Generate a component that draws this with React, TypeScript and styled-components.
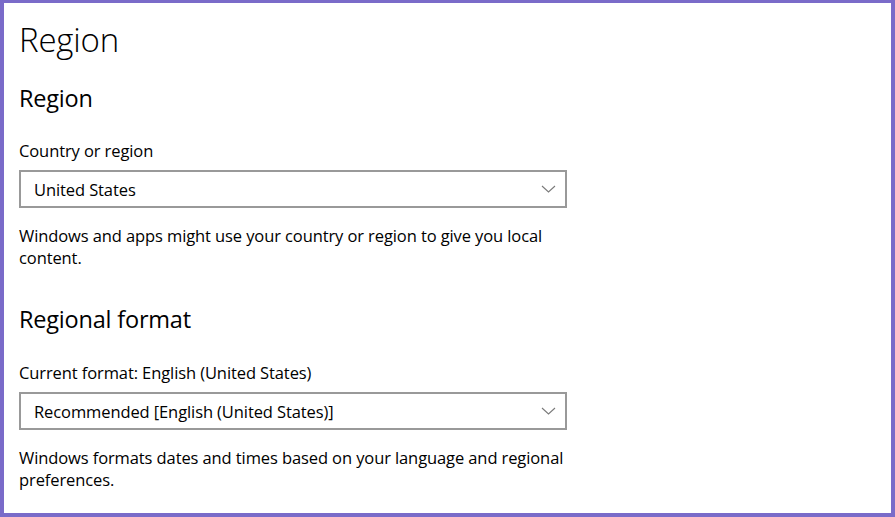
import React from "react";
import styled, { createGlobalStyle } from "styled-components";

const GlobalStyle = createGlobalStyle`
	html, body {
		margin: 0;
		padding: 0;
		background: #ffffff;
	}
	* {
		box-sizing: border-box;
	}
`;

export const Frame = styled.div`
	width: 895px;
	height: 517px;
	border: 4px solid #7a6bc9;
	border-top-width: 3px;
	background: #ffffff;
	font-family: "Open Sans", "Noto Sans", sans-serif;
	color: #000000;
	padding: 15px 0 0 15px;
	overflow: hidden;
`;

export const PageTitle = styled.h1`
	font-size: 33px;
	font-weight: 300;
	margin: 0;
	line-height: 44px;
	letter-spacing: -0.2px;
`;

export const SectionTitle = styled.h2<{ $top: number }>`
	font-size: 23.5px;
	font-weight: 400;
	margin: ${(p) => p.$top}px 0 0 0;
	line-height: 32px;
	letter-spacing: -0.2px;
`;

export const Label = styled.div<{ $top: number }>`
	font-size: 16.5px;
	line-height: 22px;
	margin-top: ${(p) => p.$top}px;
	letter-spacing: -0.1px;
`;

export const Select = styled.div`
	width: 548px;
	height: 38px;
	margin-top: 8px;
	border: 2px solid #999999;
	display: flex;
	align-items: center;
	justify-content: space-between;
	padding: 0 9px 0 13px;
	font-size: 16.5px;
	letter-spacing: -0.1px;
`;

export const Note = styled.p`
	font-size: 16.5px;
	line-height: 22px;
	margin: 17px 0 0 0;
	max-width: 572px;
	letter-spacing: -0.1px;
`;

const Chevron = () => (
	<svg width="15" height="8" viewBox="0 0 15 8">
		<path d="M1 1 L7.5 7 L14 1" fill="none" stroke="#7a7a7a" strokeWidth="1.1" />
	</svg>
);

type DropdownProps = { value: string };
const Dropdown = ({ value }: DropdownProps) => (
	<Select>
		<span>{value}</span>
		<Chevron />
	</Select>
);

export default function App() {
	return (
		<>
			<GlobalStyle />
			<Frame>
				<PageTitle>Region</PageTitle>
				<SectionTitle $top={20}>Region</SectionTitle>
				<Label $top={26}>Country or region</Label>
				<Dropdown value="United States" />
				<Note>
					Windows and apps might use your country or region to give you local
					content.
				</Note>
				<SectionTitle $top={34}>Regional format</SectionTitle>
				<Label $top={27}>Current format: English (United States)</Label>
				<Dropdown value="Recommended [English (United States)]" />
				<Note>
					Windows formats dates and times based on your language and regional
					preferences.
				</Note>
			</Frame>
		</>
	);
}
